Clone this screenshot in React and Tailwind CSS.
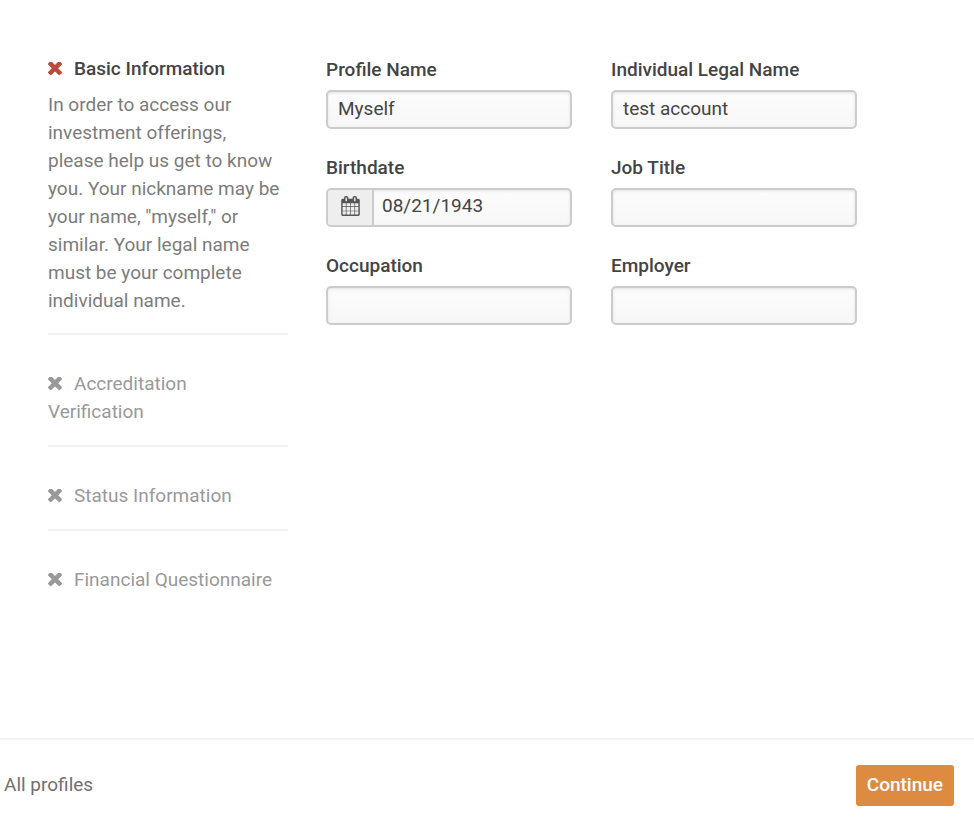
const steps = ["Accreditation Verification", "Status Information", "Financial Questionnaire"];

const CrossIcon = ({ className }) => (
  <svg viewBox="110 434 1188 1188" className={`mr-3 inline-block h-3.5 w-3.5 align-[-1px] ${className}`} fill="currentColor" aria-hidden="true">
    <path d="M1298 1322q0 40-28 68l-136 136q-28 28-68 28t-68-28l-294-294-294 294q-28 28-68 28t-68-28l-136-136q-28-28-28-68t28-68l294-294-294-294q-28-28-28-68t28-68l136-136q28-28 68-28t68 28l294 294 294-294q28-28 68-28t68 28l136 136q28 28 28 68t-28 68l-294 294 294 294q28 28 28 68z" />
  </svg>
);

const CalendarIcon = () => (
  <svg viewBox="0 0 1664 1792" className="h-5 w-[19px]" fill="currentColor" aria-hidden="true">
    <path d="M128 1664h288v-288h-288v288zM480 1664h320v-288h-320v288zM128 1312h288v-320h-288v320zM480 1312h320v-320h-320v320zM128 928h288v-288h-288v288zM864 1664h320v-288h-320v288zM480 928h320v-288h-320v288zM1248 1664h288v-288h-288v288zM864 1312h320v-320h-320v320zM512 448v-288q0-13-9.500-22.500t-22.500-9.500h-64q-13 0-22.500 9.500t-9.500 22.500v288q0 13 9.500 22.500t22.500 9.500h64q13 0 22.500-9.500t9.500-22.500zM1248 1312h288v-320h-288v320zM864 928h320v-288h-320v288zM1248 928h288v-288h-288v288zM1280 448v-288q0-13-9.500-22.500t-22.500-9.500h-64q-13 0-22.500 9.500t-9.500 22.500v288q0 13 9.500 22.500t22.500 9.500h64q13 0 22.500-9.500t9.500-22.500zM1664 384v1280q0 52-38 90t-90 38h-1408q-52 0-90-38t-38-90v-1280q0-52 38-90t90-38h128v-96q0-66 47-113t113-47h64q66 0 113 47t47 113v96h384v-96q0-66 47-113t113-47h64q66 0 113 47t47 113v96h128q52 0 90 38t38 90z" />
  </svg>
);

const Field = ({ id, label, value, icon }) => (
  <div>
    <label htmlFor={id} className="block text-[19px] leading-7 font-medium text-[#444]">
      {label}
    </label>
    <div className="mt-1.5 flex h-[39px] overflow-hidden rounded-[5px] border-2 border-[#ccc] bg-linear-to-b from-[#fcfcfc] to-[#f7f7f7] shadow-[inset_0_1px_3px_#e2e2e2]">
      {icon && (
        <span className="flex w-[46px] shrink-0 items-center justify-center border-r-2 border-[#ccc] bg-[#eee] pb-1 text-[#555]">
          {icon}
        </span>
      )}
      <input
        id={id}
        type="text"
        defaultValue={value}
        className={`w-full min-w-0 bg-transparent text-[19px] text-[#444] outline-none ${icon ? "px-2 pb-0.5" : "px-2.5"}`}
      />
    </div>
  </div>
);

const App = () => {
  return (
    <div className="flex min-h-screen flex-col bg-white font-['Roboto',sans-serif]">
      <main className="flex grow pt-14 pl-12">
        {/* Steps */}
        <aside className="w-60 shrink-0">
          <h2 className="text-[19px] leading-[26px] font-medium text-[#444]">
            <CrossIcon className="text-[#b94a3c]" />
            Basic Information
          </h2>
          <p className="mt-[9px] mb-[18px] pr-1 text-[19px] leading-7 text-[#7c7c7c]">
            In order to access our investment offerings, please help us get to know you. Your nickname may be your name,
            "myself," or similar. Your legal name must be your complete individual name.
          </p>
          {steps.map((step) => (
            <h2 key={step} className="border-t-2 border-[#f2f2f2] pt-[35px] pr-1 pb-[19px] text-[19px] leading-7 text-[#999]">
              <CrossIcon className="text-[#999]" />
              {step}
            </h2>
          ))}
        </aside>

        {/* Profile Form */}
        <form className="ml-[38px] grid max-w-[531px] grow grid-cols-2 content-start gap-x-[39px] gap-y-[25px]">
          <Field id="profile" label="Profile Name" value="Myself" />
          <Field id="legal" label="Individual Legal Name" value="test account" />
          <Field id="birth" label="Birthdate" value="08/21/1943" icon={<CalendarIcon />} />
          <Field id="job" label="Job Title" />
          <Field id="occupation" label="Occupation" />
          <Field id="employer" label="Employer" />
        </form>
      </main>

      <footer className="flex items-center justify-between border-t-2 border-[#f2f2f2] pt-[25px] pr-5 pb-3.5 pl-1">
        <a href="#" className="text-[19px] text-[#707070]">
          All profiles
        </a>
        <button className="h-[41px] rounded-[3px] bg-[#dd8b41] px-[11px] text-[19px] font-medium text-white">Continue</button>
      </footer>
    </div>
  );
};

export default App;
